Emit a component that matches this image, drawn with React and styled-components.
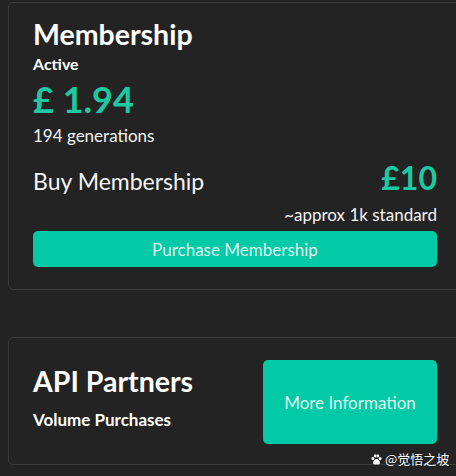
import styled, { createGlobalStyle } from 'styled-components';

const GlobalStyle = createGlobalStyle`
  html, body {
    margin: 0;
    padding: 0;
    background: #232323;
    overflow: hidden;
  }
  body {
    font-family: Lato, "Liberation Sans", sans-serif;
    color: #ffffff;
  }
`;

const Page = styled.div`
  position: relative;
  width: 456px;
  height: 476px;
  padding: 2px 0 0 8px;
  box-sizing: border-box;
  display: flex;
  flex-direction: column;
  gap: 47px;
`;

const Card = styled.section`
  width: 452px;
  box-sizing: border-box;
  border: 1px solid #3b3b3b;
  border-radius: 5px;
  background: #232323;
  padding: ${p => p.$pad};
`;

const Title = styled.h2`
  margin: 0;
  font-size: ${p => p.$size || 28.5}px;
  line-height: ${p => p.$lh || 34}px;
  font-weight: 700;
  color: #ffffff;
`;

const SubTitle = styled.div`
  margin-top: ${p => p.$mt || 0}px;
  font-size: ${p => p.$size || 16}px;
  line-height: 20px;
  font-weight: 700;
  color: #ffffff;
`;

const Balance = styled.div`
  margin-top: 3px;
  font-size: 36px;
  line-height: 44px;
  font-weight: 700;
  color: #1ec8a1;
`;

const Small = styled.div`
  margin-top: ${p => p.$mt || 0}px;
  font-size: 17px;
  line-height: 20px;
  font-weight: 400;
  color: #f2f2f2;
  text-align: ${p => p.$align || 'left'};
`;

const BuyRow = styled.div`
  margin-top: 13px;
  display: flex;
  justify-content: space-between;
  align-items: baseline;
`;

const BuyLabel = styled.span`
  font-size: 23px;
  line-height: 38px;
  font-weight: 400;
  color: #f4f4f4;
`;

const Price = styled.span`
  font-size: 32px;
  line-height: 38px;
  font-weight: 700;
  color: #1ec8a1;
`;

const Button = styled.button`
  display: flex;
  align-items: center;
  justify-content: center;
  margin-top: ${p => p.$mt || 0}px;
  width: ${p => p.$w};
  height: ${p => p.$h}px;
  border: none;
  border-radius: 5px;
  background: #02c9a6;
  color: #def6ef;
  font-family: Lato, "Liberation Sans", sans-serif;
  font-size: 17px;
  font-weight: 400;
  flex-shrink: 0;
`;

const PartnerRow = styled.div`
  display: flex;
  justify-content: space-between;
  align-items: flex-start;
`;

const PartnerText = styled.div`
  margin-top: 5px;
  display: flex;
  flex-direction: column;
`;

const Watermark = styled.div`
  position: absolute;
  left: 371px;
  top: 450px;
  display: flex;
  align-items: center;
  gap: 3px;
  font-family: "Noto Sans CJK SC", "Noto Sans", sans-serif;
  font-size: 13px;
  line-height: 18px;
  color: #ffffff;
  text-shadow: 0 0 2px rgba(0, 0, 0, 0.6);
`;

const Paw = () => (
  <svg width="11" height="11" viewBox="0 0 12 12" fill="#ffffff">
    <ellipse cx="2" cy="5" rx="1.5" ry="1.8" />
    <ellipse cx="4.5" cy="2" rx="1.5" ry="1.8" />
    <ellipse cx="7.5" cy="2" rx="1.5" ry="1.8" />
    <ellipse cx="10" cy="5" rx="1.5" ry="1.8" />
    <path d="M6 5.5c-2 0-3.8 2.4-3.8 4.2 0 1.4 1.4 1.8 3.8 1.8s3.8-.4 3.8-1.8C9.8 7.9 8 5.5 6 5.5z" />
  </svg>
);

export default function App() {
  return (
    <>
      <GlobalStyle />
      <Page>
        <Card $pad="14px 22px 22px 24px">
          <Title>Membership</Title>
          <SubTitle $mt={3}>Active</SubTitle>
          <Balance>£ 1.94</Balance>
          <Small $mt={5}>194 generations</Small>
          <BuyRow>
            <BuyLabel>Buy Membership</BuyLabel>
            <Price>£10</Price>
          </BuyRow>
          <Small $mt={5} $align="right">~approx 1k standard</Small>
          <Button $mt={6} $w="100%" $h={36}>Purchase Membership</Button>
        </Card>
        <Card $pad="22px 22px 20px 24px">
          <PartnerRow>
            <PartnerText>
              <Title $size={28.5} $lh={32}>API Partners</Title>
              <SubTitle $mt={13} $size={17}>Volume Purchases</SubTitle>
            </PartnerText>
            <Button $w="174px" $h={84}>More Information</Button>
          </PartnerRow>
        </Card>
        <Watermark>
          <Paw />
          <span>@觉悟之坡</span>
        </Watermark>
      </Page>
    </>
  );
}
